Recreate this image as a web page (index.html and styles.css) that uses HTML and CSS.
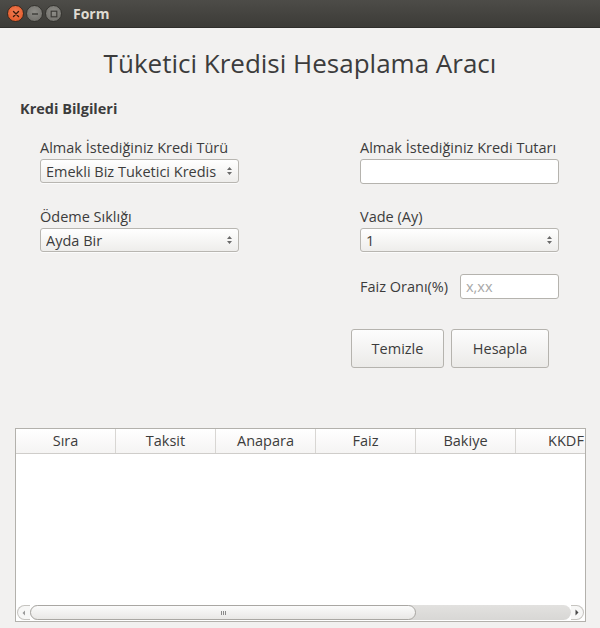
FILE: index.html
```html
<!DOCTYPE html>
<html lang="tr">
<head>
<meta charset="utf-8">
<title>Form</title>
<link rel="stylesheet" href="styles.css">
</head>
<body>
<div class="window">
  <div class="titlebar">
    <div class="wbtns">
      <span class="wbtn close"><svg width="10" height="10" viewBox="0 0 10 10"><path d="M2.5 2.5 L7.5 7.5 M7.5 2.5 L2.5 7.5" stroke="#3a1a0a" stroke-width="1.4" stroke-linecap="round"/></svg></span>
      <span class="wbtn"><svg width="10" height="10" viewBox="0 0 10 10"><path d="M2 5 H8" stroke="#3c3b37" stroke-width="1.4"/></svg></span>
      <span class="wbtn"><svg width="10" height="10" viewBox="0 0 10 10"><rect x="2.2" y="2.2" width="5.6" height="5.6" fill="none" stroke="#3c3b37" stroke-width="1.2"/></svg></span>
    </div>
    <span class="wtitle">Form</span>
  </div>
  <div class="content">
    <h1 class="apptitle">Tüketici Kredisi Hesaplama Aracı</h1>
    <div class="section">Kredi Bilgileri</div>
    <div class="form">
      <div class="field">
        <label class="lbl">Almak İstediğiniz Kredi Türü</label>
        <div class="combo"><span class="ctext">Emekli Biz Tuketici Kredis</span><span class="spin"><svg width="7" height="12" viewBox="0 0 7 12"><path d="M1 5 L3.5 2 L6 5 Z M1 7 L3.5 10 L6 7 Z" fill="#6a6a6a"/></svg></span></div>
      </div>
      <div class="field">
        <label class="lbl">Almak İstediğiniz Kredi Tutarı</label>
        <div class="entry"></div>
      </div>
      <div class="field">
        <label class="lbl">Ödeme Sıklığı</label>
        <div class="combo"><span class="ctext">Ayda Bir</span><span class="spin"><svg width="7" height="12" viewBox="0 0 7 12"><path d="M1 5 L3.5 2 L6 5 Z M1 7 L3.5 10 L6 7 Z" fill="#6a6a6a"/></svg></span></div>
      </div>
      <div class="field">
        <label class="lbl">Vade (Ay)</label>
        <div class="combo"><span class="ctext">1</span><span class="spin"><svg width="7" height="12" viewBox="0 0 7 12"><path d="M1 5 L3.5 2 L6 5 Z M1 7 L3.5 10 L6 7 Z" fill="#6a6a6a"/></svg></span></div>
      </div>
      <div class="spacer"></div>
      <div class="faiz">
        <label class="lbl">Faiz Oranı(%)</label>
        <div class="entry small"><span class="ph">x,xx</span></div>
      </div>
      <div class="spacer"></div>
      <div class="actions">
        <button class="btn b1">Temizle</button>
        <button class="btn b2">Hesapla</button>
      </div>
    </div>
    <div class="table">
      <div class="thead">
        <div class="th">Sıra</div>
        <div class="th">Taksit</div>
        <div class="th">Anapara</div>
        <div class="th">Faiz</div>
        <div class="th">Bakiye</div>
        <div class="th last">KKDF</div>
      </div>
      <div class="tbody"></div>
      <div class="hscroll">
        <span class="arr left"><svg width="4" height="6" viewBox="0 0 4 6"><path d="M3 0.5 L0.5 3 L3 5.5 Z" fill="#9a9a9a"/></svg></span>
        <div class="track">
          <div class="thumb"><span class="grip"></span></div>
        </div>
        <span class="arr right"><svg width="4" height="7" viewBox="0 0 4 7"><path d="M0.5 0.5 L3.5 3.5 L0.5 6.5 Z" fill="#4a4a4a"/></svg></span>
      </div>
    </div>
  </div>
</div>
</body>
</html>
```

FILE: styles.css
```css
* { box-sizing: border-box; }
html, body { margin: 0; padding: 0; }
body {
  width: 600px;
  height: 628px;
  overflow: hidden;
  background: #f2f1f0;
  font-family: "Open Sans", "DejaVu Sans", sans-serif;
  color: #3c3c3c;
}
.window { width: 600px; height: 628px; display: flex; flex-direction: column; }
.titlebar {
  height: 28px;
  flex: none;
  background: linear-gradient(#4d4c48, #3c3b37);
  display: flex;
  align-items: center;
  padding-left: 7px;
  border-bottom: 1px solid #2f2e2b;
}
.wbtns { display: flex; gap: 2px; }
.wbtn {
  width: 17px; height: 17px; border-radius: 50%;
  background: radial-gradient(circle at 50% 40%, #8e8d88, #6b6a65);
  border: 1px solid #353430;
  display: flex; align-items: center; justify-content: center;
}
.wbtn.close { background: radial-gradient(circle at 50% 40%, #f27d55, #e0521f); border-color: #3a2a20; }
.wtitle {
  margin-left: 11px;
  font-weight: bold;
  font-size: 14px;
  color: #dfdbd2;
}
.content { flex: 1; display: flex; flex-direction: column; padding: 0 15px; }
.apptitle {
  margin: 17px 0 0;
  text-align: center;
  font-weight: normal;
  font-size: 26px;
  height: 36px;
  line-height: 36px;
  color: #3c3c3c;
}
.section {
  margin: 18px 0 0 5px;
  font-weight: bold;
  font-size: 14.5px;
  height: 20px;
  line-height: 20px;
}
.form {
  display: grid;
  grid-template-columns: 199px 199px;
  column-gap: 121px;
  row-gap: 24px;
  padding-left: 25px;
  margin-top: 20px;
}
.field { display: flex; flex-direction: column; }
.lbl { font-size: 14.5px; height: 18px; line-height: 18px; margin-bottom: 2px; color: #3c3c3c; white-space: nowrap; }
.combo {
  height: 24px;
  border: 1px solid #b8b6b1;
  border-radius: 3px;
  background: linear-gradient(#ffffff, #eeedeb);
  display: flex; align-items: center;
  padding: 0 5px 0 5px;
  font-size: 14.5px;
  color: #3c3c3c;
  box-shadow: 0 1px 0 rgba(255,255,255,0.7);
}
.ctext { flex: 1; white-space: nowrap; overflow: hidden; }
.spin { display: flex; align-items: center; margin-left: 3px; }
.entry {
  height: 25px;
  border: 1px solid #b5b3ae;
  border-radius: 3px;
  background: #ffffff;
  display: flex; align-items: center; padding: 0 5px;
  font-size: 14.5px;
}
.entry.small { width: 99px; }
.ph { color: #a8a8a8; }
.faiz { display: flex; align-items: center; margin-top: -2px; }
.faiz .lbl { width: 100px; margin-bottom: 0; }
.actions { display: flex; gap: 7px; margin-left: -9px; margin-top: 6px; }
.btn {
  height: 39px;
  border: 1px solid #b5b3ae;
  border-radius: 3px;
  background: linear-gradient(#fdfdfd, #ebeae8);
  font-family: inherit;
  font-size: 14.5px;
  color: #3c3c3c;
  padding: 0;
}
.b1 { width: 93px; }
.b2 { width: 98px; }
.table {
  margin-top: 60px;
  height: 194px;
  width: 571px;
  border: 1px solid #b3b1ac;
  background: #ffffff;
  display: flex; flex-direction: column;
  overflow: hidden;
}
.thead { display: flex; height: 25px; flex: none; border-bottom: 1px solid #cfcdca; background: linear-gradient(#ffffff, #f5f4f3); }
.th {
  flex: none;
  width: 100px;
  border-right: 1px solid #d8d6d3;
  text-align: center;
  font-size: 14.5px;
  line-height: 24px;
  color: #3c3c3c;
  white-space: nowrap;
}
.th.last { width: 100px; border-right: none; }
.tbody { flex: 1; }
.hscroll {
  height: 17px; flex: none;
  display: flex; align-items: center;
  padding: 0 1px;
  background: #fff;
}
.arr {
  width: 13px; height: 15px;
  border: 1px solid #c6c4c0;
  border-radius: 8px;
  display: flex; align-items: center; justify-content: center;
  background: #f7f7f6;
}
.arr.left { border-right: none; border-radius: 8px 0 0 8px; }
.arr.right { border-left: none; border-radius: 0 8px 8px 0; }
.track {
  flex: 1; height: 15px;
  background: linear-gradient(#e2e1df, #d8d7d5);
  border-radius: 8px;
  display: flex;
}
.thumb {
  width: 386px; height: 15px;
  border: 1px solid #a9a7a3;
  border-radius: 8px;
  background: linear-gradient(#fbfbfb, #e9e8e6);
  display: flex; align-items: center; justify-content: center;
}
.grip { width: 5px; height: 4px; border-left: 1px solid #8a8a8a; border-right: 1px solid #8a8a8a; position: relative; }
.grip::after { content: ""; position: absolute; left: 1px; top: 0; width: 1px; height: 4px; background: #8a8a8a; }
```
